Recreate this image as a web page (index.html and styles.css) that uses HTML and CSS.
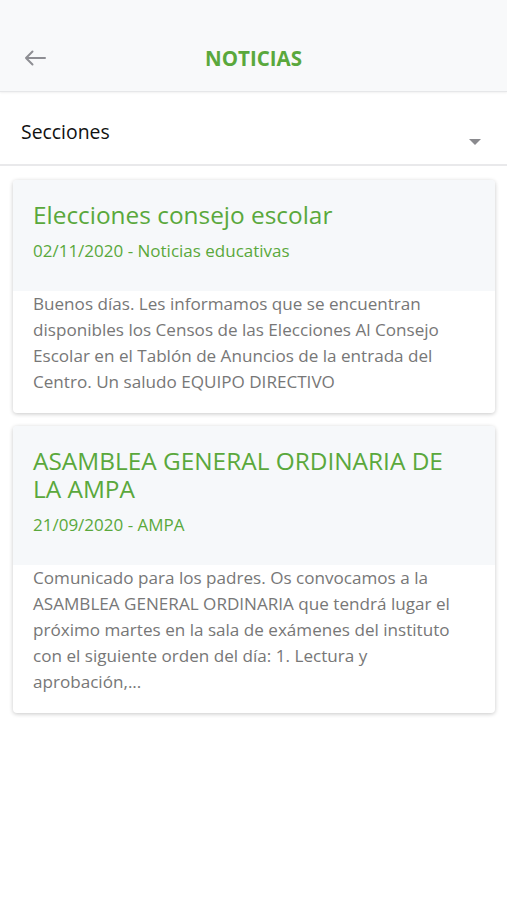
FILE: index.html
```html
<!DOCTYPE html>
<html lang="es">
<head>
<meta charset="utf-8">
<link rel="stylesheet" href="styles.css">
</head>
<body>
<div class="app">
  <header class="topbar">
    <div class="status"></div>
    <div class="nav">
      <button class="back" aria-label="Atrás">
        <svg width="22" height="16" viewBox="0 0 22 16"><path d="M21 8H2M8.5 1.5L2 8l6.5 6.5" fill="none" stroke="#8e8e93" stroke-width="2" stroke-linecap="round" stroke-linejoin="round"/></svg>
      </button>
      <h1 class="title">NOTICIAS</h1>
      <span class="spacer"></span>
    </div>
  </header>
  <div class="select">
    <span class="select-label">Secciones</span>
    <span class="caret"></span>
  </div>
  <main class="list">
    <article class="card">
      <div class="card-head">
        <h2 class="card-title">Elecciones consejo escolar</h2>
        <p class="card-meta">02/11/2020 - Noticias educativas</p>
      </div>
      <p class="card-body">Buenos días. Les informamos que se encuentran disponibles los Censos de las Elecciones Al Consejo Escolar en el Tablón de Anuncios de la entrada del Centro. Un saludo EQUIPO DIRECTIVO</p>
    </article>
    <article class="card">
      <div class="card-head">
        <h2 class="card-title">ASAMBLEA GENERAL ORDINARIA DE LA AMPA</h2>
        <p class="card-meta">21/09/2020 - AMPA</p>
      </div>
      <p class="card-body">Comunicado para los padres. Os convocamos a la ASAMBLEA GENERAL ORDINARIA que tendrá lugar el próximo martes en la sala de exámenes del instituto con el siguiente orden del día: 1. Lectura y aprobación,...</p>
    </article>
  </main>
</div>
</body>
</html>
```

FILE: styles.css
```css
* { box-sizing: border-box; }
html, body { margin: 0; padding: 0; background: #fff; }
body { font-family: "Open Sans", "Noto Sans", sans-serif; width: 507px; height: 900px; overflow: hidden; }

.topbar { background: #f8f9fa; border-bottom: 1px solid #e6e7e9; box-shadow: 0 1px 2px rgba(0,0,0,0.06); }
.status { height: 24px; }
.nav { height: 67px; display: flex; align-items: center; padding: 0 18px 0 24px; }
.back { border: 0; background: none; padding: 0; width: 24px; height: 24px; display: flex; align-items: center; cursor: pointer; }
.title { flex: 1; margin: 0 6px 0 0; text-align: center; font-size: 20.5px; font-weight: 700; color: #5aa83c; }
.spacer { width: 24px; }

.select { height: 74px; display: flex; align-items: center; justify-content: space-between; padding: 0 26px 0 21px; border-bottom: 2px solid #e9e9eb; }
.select-label { font-size: 19.4px; color: #111; margin-top: 6px; }
.caret { width: 0; height: 0; border-left: 6px solid transparent; border-right: 6px solid transparent; border-top: 6px solid #8a8a8e; margin-top: 28px; }

.list { display: flex; flex-direction: column; gap: 13px; padding: 14px 12px 0 13px; }
.card { background: #fff; border-radius: 4px; box-shadow: 0 1px 4px rgba(0,0,0,0.22); overflow: hidden; }
.card-head { background: #f6f8fa; padding: 21px 20px 29px; }
.card-title { margin: 0; font-size: 24.4px; font-weight: 400; line-height: 28px; color: #5aa83c; }
.card-meta { margin: 11px 0 0; font-size: 17px; line-height: 22px; color: #5aa83c; }
.card-body { margin: 0; padding: 0 20px 18px; font-size: 17.1px; line-height: 26px; color: #777; }
```
